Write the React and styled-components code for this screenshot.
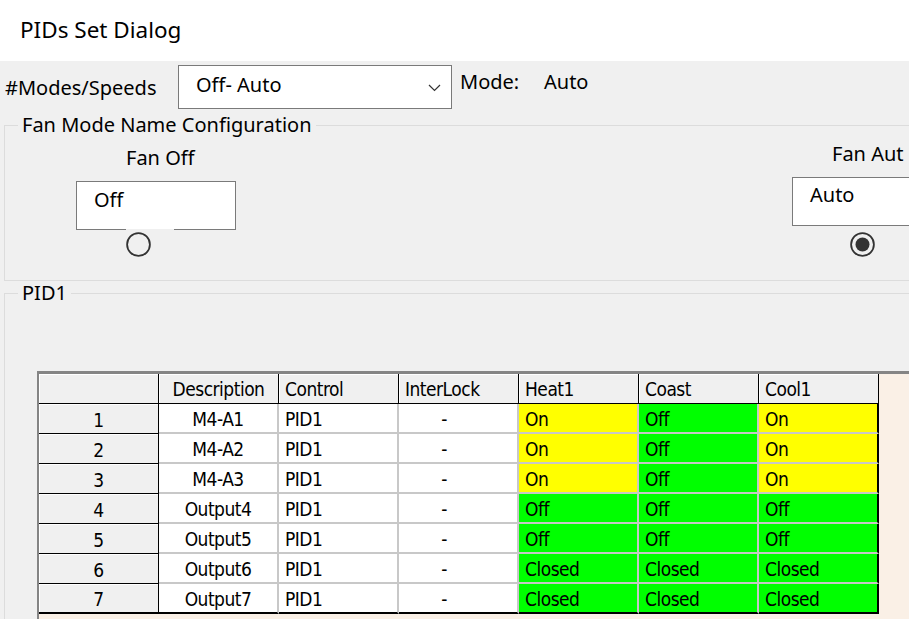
import React from 'react';
import styled, { createGlobalStyle } from 'styled-components';

const GlobalStyle = createGlobalStyle`
  html, body {
    margin: 0;
    padding: 0;
    background: #f0f0f0;
  }
  body {
    font-family: "Noto Sans", "DejaVu Sans", sans-serif;
    color: #000;
  }
  * {
    box-sizing: border-box;
  }
`;

const rows = [
  { n: 1, desc: 'M4-A1', control: 'PID1', lock: '-', heat: 'On', coast: 'Off', cool: 'On' },
  { n: 2, desc: 'M4-A2', control: 'PID1', lock: '-', heat: 'On', coast: 'Off', cool: 'On' },
  { n: 3, desc: 'M4-A3', control: 'PID1', lock: '-', heat: 'On', coast: 'Off', cool: 'On' },
  { n: 4, desc: 'Output4', control: 'PID1', lock: '-', heat: 'Off', coast: 'Off', cool: 'Off' },
  { n: 5, desc: 'Output5', control: 'PID1', lock: '-', heat: 'Off', coast: 'Off', cool: 'Off' },
  { n: 6, desc: 'Output6', control: 'PID1', lock: '-', heat: 'Closed', coast: 'Closed', cool: 'Closed' },
  { n: 7, desc: 'Output7', control: 'PID1', lock: '-', heat: 'Closed', coast: 'Closed', cool: 'Closed' },
];

const stateColor = state => (state === 'On' ? '#ffff00' : '#00ff00');

function Radio({ checked }) {
  return (
    <svg width="25" height="25" viewBox="0 0 25 25">
      <circle cx="12.5" cy="12.5" r="11.4" fill="#f0f0f0" stroke="#333" strokeWidth="1.8" />
      {checked && <circle cx="12.5" cy="12.5" r="7" fill="#333" />}
    </svg>
  );
}

function FanMode({ label, value, checked, labelInset, radioInset, top, radioGap, cut }) {
  return (
    <FanItem $top={top}>
      <FanLabel $inset={labelInset}>{label}</FanLabel>
      <NameBox $pad={top > 5 ? 6 : 5}>{value}</NameBox>
      <RadioHolder $inset={radioInset} $gap={radioGap} $cut={cut}>
        <Radio checked={checked} />
      </RadioHolder>
    </FanItem>
  );
}

function App() {
  return (
    <Window>
      <GlobalStyle />
      <TitleBar>PIDs Set Dialog</TitleBar>

      <TopRow>
        <ModesLabel>#Modes/Speeds</ModesLabel>
        <Combo>
          <span>Off- Auto</span>
          <svg width="13" height="8" viewBox="0 0 13 8">
            <polyline points="1,1 6.5,6.5 12,1" fill="none" stroke="#333" strokeWidth="1.2" />
          </svg>
        </Combo>
        <ModeLabel>Mode:</ModeLabel>
        <ModeValue>Auto</ModeValue>
      </TopRow>

      <FanGroup>
        <Legend>Fan Mode Name Configuration</Legend>
        <FanRow>
          <FanMode label="Fan Off" value="Off" labelInset={50} radioInset={50} top={9} radioGap={3} cut />
          <FanMode label="Fan Aut" value="Auto" checked labelInset={40} radioInset={58} top={5} radioGap={6} />
        </FanRow>
      </FanGroup>

      <PidGroup>
        <Legend>PID1</Legend>
        <GridFrame>
          <Table>
            <HeadCell />
            <HeadCell $center>Description</HeadCell>
            <HeadCell>Control</HeadCell>
            <HeadCell>InterLock</HeadCell>
            <HeadCell>Heat1</HeadCell>
            <HeadCell>Coast</HeadCell>
            <HeadCell>Cool1</HeadCell>
            {rows.map((r, i) => {
              const last = i === rows.length - 1;
              return (
                <React.Fragment key={r.n}>
                  <RowHead $last={last}>{r.n}</RowHead>
                  <Cell $center $last={last}>{r.desc}</Cell>
                  <Cell $last={last}>{r.control}</Cell>
                  <Cell $center $shift={28} $last={last}>{r.lock}</Cell>
                  <Cell $last={last} $bg={stateColor(r.heat)}>{r.heat}</Cell>
                  <Cell $last={last} $bg={stateColor(r.coast)}>{r.coast}</Cell>
                  <Cell $last={last} $edge $bg={stateColor(r.cool)}>{r.cool}</Cell>
                </React.Fragment>
              );
            })}
          </Table>
        </GridFrame>
      </PidGroup>
    </Window>
  );
}

const Window = styled.div`
  width: 909px;
  height: 619px;
  overflow: hidden;
  display: flex;
  flex-direction: column;
  background: #f0f0f0;
  font-size: 20px;
`;

const TitleBar = styled.div`
  height: 61px;
  flex-shrink: 0;
  display: flex;
  align-items: center;
  padding: 0 0 2px 20px;
  background: #fff;
  font-size: 22.5px;
  line-height: 24px;
`;

const TopRow = styled.div`
  height: 52px;
  flex-shrink: 0;
  display: flex;
  align-items: flex-start;
  padding-left: 5px;
  line-height: 24px;
`;

const ModesLabel = styled.div`
  width: 173px;
  margin-top: 15px;
`;

const Combo = styled.div`
  width: 274px;
  height: 44px;
  margin-top: 4px;
  display: flex;
  align-items: center;
  justify-content: space-between;
  padding: 0 10px 4px 17px;
  background: #fff;
  border: 1px solid #7a7a7a;

  svg {
    margin-top: 6px;
  }
`;

const ModeLabel = styled.div`
  width: 84px;
  margin: 9px 0 0 8px;
`;

const ModeValue = styled.div`
  margin-top: 9px;
`;

const Legend = styled.legend`
  margin-left: 13px;
  padding: 0 4px;
  line-height: 24px;
`;

const FanGroup = styled.fieldset`
  flex-shrink: 0;
  height: 168px;
  margin: 0 -200px 0 4px;
  padding: 0;
  min-width: 0;
  border: 1px solid #dcdcdc;
`;

const FanRow = styled.div`
  display: flex;
  gap: 556px;
  padding-left: 71px;
`;

const FanItem = styled.div`
  display: flex;
  flex-direction: column;
  align-items: flex-start;
  padding-top: ${p => p.$top}px;
`;

const FanLabel = styled.div`
  padding-left: ${p => p.$inset}px;
  line-height: 24px;
  margin-bottom: 11px;
`;

const NameBox = styled.div`
  width: 160px;
  height: 49px;
  padding: ${p => p.$pad}px 0 0 17px;
  line-height: 24px;
  background: #fff;
  border: 1px solid #7a7a7a;
`;

const RadioHolder = styled.div`
  width: 48px;
  margin-left: ${p => p.$inset}px;
  margin-top: ${p => (p.$cut ? -1 : 0)}px;
  padding-top: ${p => p.$gap}px;
  background: ${p => (p.$cut ? '#f0f0f0' : 'transparent')};
  line-height: 0;
`;

const PidGroup = styled.fieldset`
  flex: 1;
  margin: 0 -200px -200px 4px;
  padding: 0;
  min-width: 0;
  border: 1px solid #dcdcdc;
`;

const GridFrame = styled.div`
  margin: 66px 0 0 32px;
  height: 400px;
  background: #faf0e6;
  border-top: 3px solid #858585;
  border-left: 2px solid #858585;
`;

const Table = styled.div`
  display: grid;
  grid-template-columns: repeat(7, 120px);
  grid-auto-rows: 30px;
  width: max-content;
  font-family: "DejaVu Sans Condensed", "DejaVu Sans", sans-serif;
  font-size: 19px;
  letter-spacing: -0.5px;
  line-height: 20px;
`;

const HeadCell = styled.div`
  display: flex;
  align-items: center;
  justify-content: ${p => (p.$center ? 'center' : 'flex-start')};
  padding-left: ${p => (p.$center ? 0 : 6)}px;
  background: #f0f0f0;
  border-right: 1px solid #000;
  border-bottom: 1px solid #000;
  box-shadow: inset 1px 1px 0 #fff;
`;

const RowHead = styled.div`
  display: flex;
  align-items: center;
  justify-content: center;
  padding-top: 2px;
  background: #f0f0f0;
  border-right: 1px solid #000;
  border-bottom: ${p => (p.$last ? 2 : 1)}px solid #000;
  box-shadow: inset 1px 1px 0 #fff;
`;

const Cell = styled.div`
  display: flex;
  align-items: center;
  justify-content: ${p => (p.$center ? 'center' : 'flex-start')};
  padding: 2px ${p => p.$shift || 0}px 0 ${p => (p.$center ? 0 : 6)}px;
  background: ${p => p.$bg || '#fff'};
  border-right: 2px solid ${p => (p.$edge ? '#000' : '#c8c8c8')};
  border-bottom: 2px solid ${p => (p.$last ? '#000' : '#c8c8c8')};
`;

export default App;
